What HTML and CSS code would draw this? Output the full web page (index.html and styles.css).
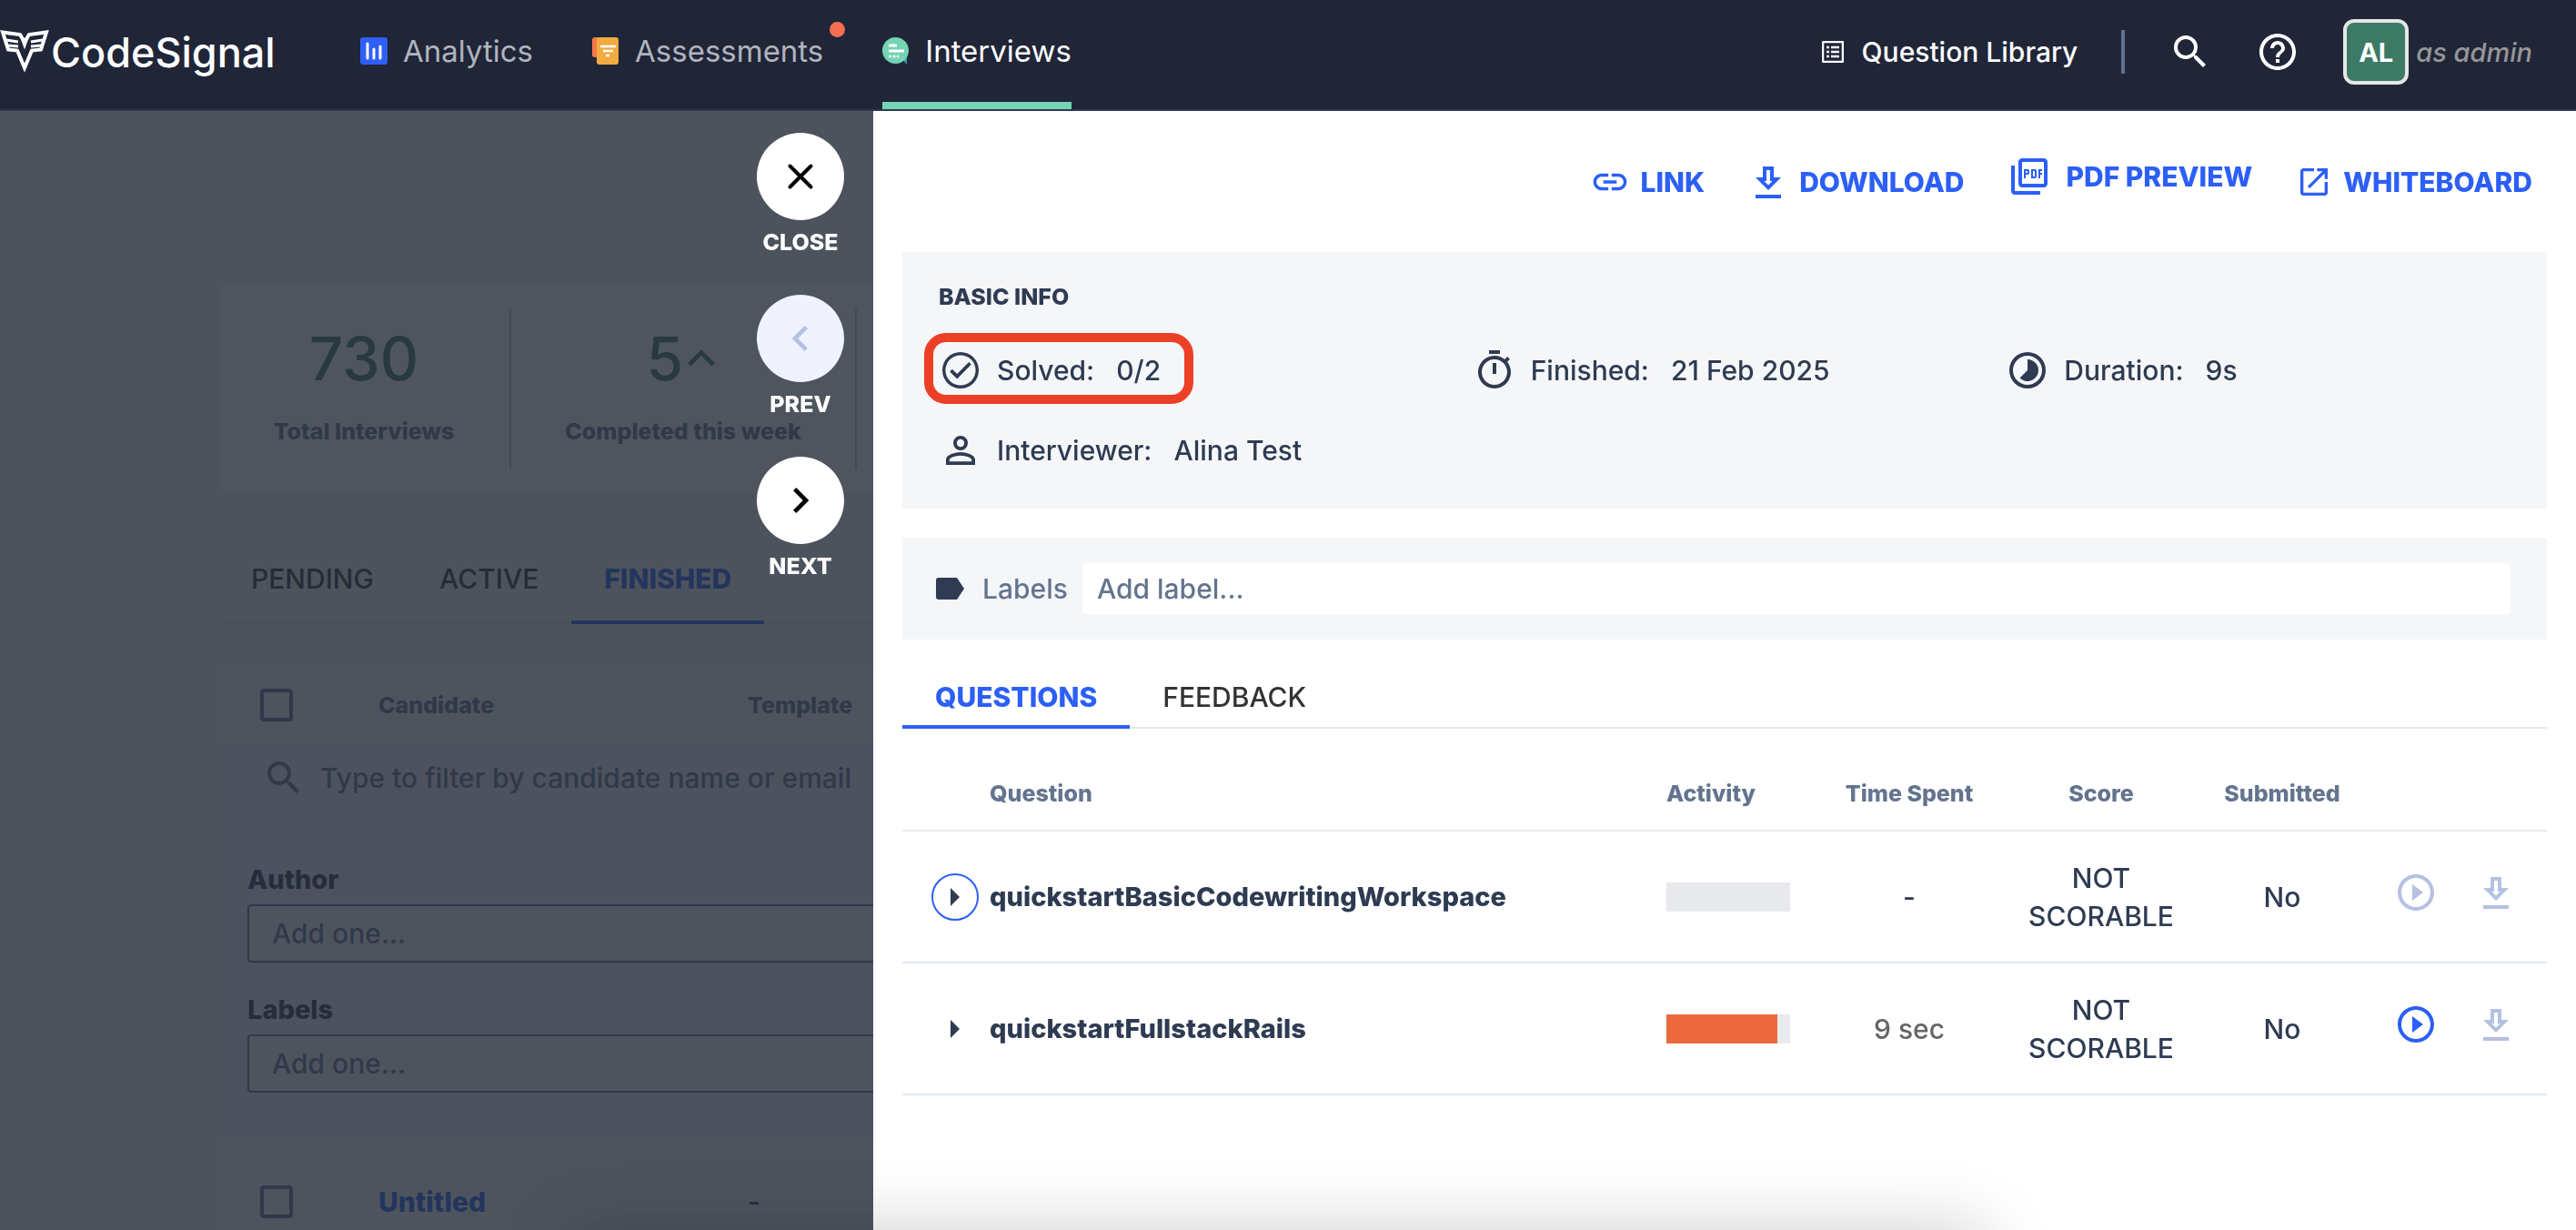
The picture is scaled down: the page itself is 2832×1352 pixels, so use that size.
FILE: index.html
```html
<!DOCTYPE html>
<html lang="en">
<head>
    <meta charset="UTF-8">
    <meta name="viewport" content="width=device-width, initial-scale=1.0">
    <title>CodeSignal - Interviews</title>
    <link rel="stylesheet" href="styles.css">
</head>
<body>

<header class="topbar">
    <a class="logo" href="#" aria-label="CodeSignal">
        <svg width="54" height="48" viewBox="0 0 54 48" fill="none" stroke="#fff" stroke-width="4"><path d="M3 2.500L22 5l5 8 5-8 19-2.500-6 19-10 1-8 19-8-19-10-1z"/><path d="M23 6l4 11 4-11" stroke-width="3"/><path d="M7 11l13 2M9 17l11 1M47 11l-13 2M45 17l-11 1" stroke-width="3"/></svg>
        <span>CodeSignal</span>
    </a>
    <nav class="main-nav">
        <a class="nav-link" href="#">
            <svg width="30" height="30" viewBox="0 0 30 30"><rect width="30" height="30" rx="3" fill="#2f5ff5"/><path d="M8 7v16M15 13v10M22 10v13" stroke="#fff" stroke-width="3" stroke-linecap="round"/></svg>
            Analytics
        </a>
        <a class="nav-link" href="#">
            <svg width="30" height="30" viewBox="0 0 30 30"><rect width="24" height="22" rx="3" fill="#f2784b"/><rect x="5" width="24" height="30" rx="3" fill="#f2ab40"/><path d="M9 10h17M12 15h11M15 20h4" stroke="#fff" stroke-width="2.5"/></svg>
            Assessments
            <span class="dot"></span>
        </a>
        <a class="nav-link active" href="#">
            <svg width="30" height="30" viewBox="0 0 30 30"><path d="M20 22l7 8v-9z" fill="#3a9a9b"/><circle cx="14.500" cy="14.500" r="14.500" fill="#74d4b4"/><path d="M7 9h9M7 15h17" stroke="#fff" stroke-width="3"/><path d="M7 21h11" stroke="#fff" stroke-width="2.500" stroke-dasharray="3 1.500"/></svg>
            Interviews
        </a>
    </nav>
    <div class="topbar-right">
        <a class="library" href="#">
            <svg width="24" height="24" viewBox="0 0 24 24" fill="none" stroke="#fff"><rect x="1" y="1" width="22" height="22" rx="1" stroke-width="2.500"/><path d="M5 7h3M5 12h3M5 17h3M10 7h9M10 12h9M10 17h9" stroke-width="2.500"/></svg>
            Question Library
        </a>
        <span class="divider"></span>
        <button class="icon-btn" aria-label="Search">
            <svg width="48" height="48" viewBox="0 0 24 24" fill="#fff"><path d="M15.500 14h-.79l-.28-.27A6.471 6.471 0 0 0 16 9.500 6.500 6.500 0 1 0 9.500 16c1.610 0 3.090-.59 4.230-1.570l.27.28v.79l5 4.990L20.490 19l-4.990-5zm-6 0C7.010 14 5 11.990 5 9.500S7.010 5 9.500 5 14 7.010 14 9.500 11.990 14 9.500 14z"/></svg>
        </button>
        <button class="icon-btn" aria-label="Help">
            <svg width="48" height="48" viewBox="0 0 24 24" fill="#fff"><path d="M11 18h2v-2h-2v2zm1-16C6.480 2 2 6.480 2 12s4.480 10 10 10 10-4.480 10-10S17.520 2 12 2zm0 18c-4.410 0-8-3.590-8-8s3.590-8 8-8 8 3.590 8 8-3.590 8-8 8zm0-14c-2.210 0-4 1.790-4 4h2c0-1.100.9-2 2-2s2 .9 2 2c0 2-3 1.750-3 5h2c0-2.250 3-2.500 3-5 0-2.210-1.790-4-4-4z"/></svg>
        </button>
        <button class="avatar">AL</button>
        <em class="role">as admin</em>
    </div>
</header>

<main class="page">
    <section class="stats">
        <div class="stat">
            <strong>730</strong>
            <span>Total Interviews</span>
        </div>
        <div class="stat">
            <strong>5<svg width="40" height="48" viewBox="2 0 20 24"><path d="M5.400 15.400L12 8.800l6.600 6.600" fill="none" stroke="#3d7a66" stroke-width="2.400"/></svg></strong>
            <span>Completed this week</span>
        </div>
    </section>

    <div class="tabs page-tabs">
        <button class="tab">PENDING</button>
        <button class="tab">ACTIVE</button>
        <button class="tab selected">FINISHED</button>
    </div>

    <section class="candidates">
        <div class="list-row list-head">
            <input type="checkbox" aria-label="Select all">
            <span>Candidate</span>
            <span>Template</span>
        </div>
        <div class="filter">
            <svg width="48" height="48" viewBox="0 0 24 24" fill="#64748f"><path d="M15.500 14h-.79l-.28-.27A6.471 6.471 0 0 0 16 9.500 6.500 6.500 0 1 0 9.500 16c1.610 0 3.090-.59 4.230-1.570l.27.28v.79l5 4.990L20.490 19l-4.990-5zm-6 0C7.010 14 5 11.990 5 9.500S7.010 5 9.500 5 14 7.010 14 9.500 11.990 14 9.500 14z"/></svg>
            <input type="text" placeholder="Type to filter by candidate name or email" aria-label="Filter candidates">
        </div>
        <div class="filter-fields">
            <label for="author">Author</label>
            <input type="text" id="author" placeholder="Add one...">
            <label for="filterLabels">Labels</label>
            <input type="text" id="filterLabels" placeholder="Add one...">
        </div>
        <div class="list-row">
            <input type="checkbox" aria-label="Select Untitled">
            <a href="#">Untitled</a>
            <span>-</span>
        </div>
    </section>
</main>

<div class="overlay">
    <div class="overlay-controls">
        <div class="control">
            <button id="close" aria-label="Close"><svg width="48" height="48" viewBox="0 0 48 48"><path d="M12.500 12.500l23 23M35.500 12.500l-23 23" stroke="#000" stroke-width="4" stroke-linecap="round"/></svg></button>
            <label for="close">CLOSE</label>
        </div>
        <div class="control">
            <button id="prev" disabled aria-label="Previous"><svg width="56" height="56" viewBox="0 0 24 24" fill="#b5c0e2"><path d="M15.410 7.410L14 6l-6 6 6 6 1.410-1.410L10.830 12z"/></svg></button>
            <label for="prev">PREV</label>
        </div>
        <div class="control">
            <button id="next" aria-label="Next"><svg width="56" height="56" viewBox="0 0 24 24"><path d="M10 6L8.590 7.410 13.170 12l-4.580 4.590L10 18l6-6z"/></svg></button>
            <label for="next">NEXT</label>
        </div>
    </div>

    <section class="drawer">
        <div class="actions">
            <a href="#"><svg width="44" height="44" viewBox="0 0 24 24" fill="#2c5ff6"><path d="M3.900 12c0-1.710 1.390-3.100 3.100-3.100h4V7H7c-2.760 0-5 2.240-5 5s2.240 5 5 5h4v-1.900H7c-1.710 0-3.100-1.390-3.100-3.100zM8 13h8v-2H8v2zm9-6h-4v1.900h4c1.710 0 3.100 1.390 3.100 3.100s-1.390 3.100-3.100 3.100h-4V17h4c2.760 0 5-2.240 5-5s-2.240-5-5-5z"/></svg>LINK</a>
            <a href="#"><svg width="44" height="44" viewBox="0 0 44 44" fill="#2c5ff6"><path fill-rule="evenodd" d="M16 5h12v12h8L22 31 8 17h8zM20 9v12h-2.500l4.500 4.500 4.500-4.500H24V9zM8 36h28v4H8z"/></svg>DOWNLOAD</a>
            <a class="pdf" href="#"><svg width="48" height="48" viewBox="0 0 24 24" fill="#2c5ff6"><path d="M20 2H8c-1.100 0-2 .9-2 2v12c0 1.100.9 2 2 2h12c1.100 0 2-.9 2-2V4c0-1.100-.9-2-2-2zm0 14H8V4h12v12zM4 6H2v14c0 1.100.9 2 2 2h14v-2H4V6zm12 6V9c0-.55-.45-1-1-1h-2v5h2c.55 0 1-.45 1-1zm-2-3h1v3h-1V9zm4 2h1v-1h-1V9h1V8h-2v5h1zm-8 0h1c.55 0 1-.45 1-1V9c0-.55-.45-1-1-1H9v5h1v-2zm0-2h1v1h-1V9z"/></svg>PDF PREVIEW</a>
            <a href="#"><svg width="40" height="40" viewBox="0 0 24 24" fill="#2c5ff6"><path d="M19 19H5V5h7V3H5c-1.110 0-2 .9-2 2v14c0 1.100.89 2 2 2h14c1.100 0 2-.9 2-2v-7h-2v7zM14 3v2h3.590l-9.830 9.830 1.410 1.410L19 6.410V10h2V3h-7z"/></svg>WHITEBOARD</a>
        </div>

        <div class="info-card">
            <h2>BASIC INFO</h2>
            <div class="info-grid">
                <div class="info highlight">
                    <svg width="48" height="48" viewBox="0 0 24 24" fill="#2e3b52"><path d="M12 2a10 10 0 1 0 0 20 10 10 0 0 0 0-20zm0 18.300a8.300 8.300 0 1 1 0-16.600 8.300 8.300 0 0 1 0 16.600zM16.600 7.500l-6.500 6.500-2.700-2.600-1.300 1.400 4 3.900 7.800-7.900z"/></svg>
                    <span>Solved:</span><span>0/2</span>
                </div>
                <div class="info">
                    <svg width="48" height="48" viewBox="0 0 24 24" fill="#2e3b52"><path d="M15 1H9v2h6V1zm-4 13h2V8h-2v6zm8.030-6.610l1.420-1.420c-.43-.51-.9-.99-1.410-1.410l-1.420 1.420A8.962 8.962 0 0 0 12 4a9 9 0 1 0 7.030 3.390zM12 20c-3.870 0-7-3.130-7-7s3.130-7 7-7 7 3.130 7 7-3.130 7-7 7z"/></svg>
                    <span>Finished:</span><span>21 Feb 2025</span>
                </div>
                <div class="info">
                    <svg width="48" height="48" viewBox="0 0 24 24" fill="#2e3b52"><path d="M12 2a10 10 0 1 0 0 20 10 10 0 0 0 0-20zm0 18a8 8 0 1 1 0-16 8 8 0 0 1 0 16zM12 6v6l-4.240 4.240A6 6 0 1 0 12 6z"/></svg>
                    <span>Duration:</span><span>9s</span>
                </div>
                <div class="info">
                    <svg width="48" height="48" viewBox="0 0 24 24" fill="#2e3b52"><path d="M12 5.900a2.100 2.100 0 1 1 0 4.200 2.100 2.100 0 0 1 0-4.200m0 9c2.970 0 6.100 1.460 6.100 2.100v1.100H5.900V17c0-.64 3.130-2.100 6.100-2.100M12 4a4 4 0 1 0 0 8 4 4 0 0 0 0-8zm0 9c-2.670 0-8 1.340-8 4v3h16v-3c0-2.660-5.330-4-8-4z"/></svg>
                    <span>Interviewer:</span><span>Alina Test</span>
                </div>
            </div>
        </div>

        <div class="label-card">
            <svg width="32" height="24" viewBox="0 0 32 24" fill="#2e3b52"><path d="M3 0h20l8 12-8 12H3q-3 0-3-3V3q0-3 3-3z"/></svg>
            <label for="labels">Labels</label>
            <input type="text" id="labels" placeholder="Add label...">
        </div>

        <div class="tabs">
            <button class="tab selected">QUESTIONS</button>
            <button class="tab">FEEDBACK</button>
        </div>

        <table class="questions">
            <thead>
                <tr>
                    <th class="col-toggle"></th>
                    <th class="col-question">Question</th>
                    <th class="col-activity">Activity</th>
                    <th class="col-time">Time Spent</th>
                    <th class="col-score">Score</th>
                    <th class="col-submitted">Submitted</th>
                    <th class="col-play"></th>
                    <th class="col-download"></th>
                </tr>
            </thead>
            <tbody>
                <tr>
                    <td><button class="toggle focused" aria-label="Expand"><svg width="10" height="20" viewBox="0 0 10 20"><path d="M0 0l10 10L0 20z" fill="#2e3b52"/></svg></button></td>
                    <td class="name">quickstartBasicCodewritingWorkspace</td>
                    <td><div class="bar"></div></td>
                    <td class="mid">-</td>
                    <td class="mid">NOT SCORABLE</td>
                    <td class="mid">No</td>
                    <td class="action"><button class="icon-btn" disabled aria-label="Play"><svg width="48" height="48" viewBox="0 0 24 24" fill="#b5c0e2"><path d="M10 16.500l6-4.500-6-4.500v9zM12 2C6.480 2 2 6.480 2 12s4.480 10 10 10 10-4.480 10-10S17.520 2 12 2zm0 18c-4.410 0-8-3.590-8-8s3.590-8 8-8 8 3.590 8 8-3.590 8-8 8z"/></svg></button></td>
                    <td class="action"><button class="icon-btn" disabled aria-label="Download"><svg width="44" height="44" viewBox="0 0 44 44" fill="#b5c0e2"><path fill-rule="evenodd" d="M16 5h12v12h8L22 31 8 17h8zM20 9v12h-2.500l4.500 4.500 4.500-4.500H24V9zM8 36h28v4H8z"/></svg></button></td>
                </tr>
                <tr>
                    <td><button class="toggle" aria-label="Expand"><svg width="10" height="20" viewBox="0 0 10 20"><path d="M0 0l10 10L0 20z" fill="#2e3b52"/></svg></button></td>
                    <td class="name">quickstartFullstackRails</td>
                    <td><div class="bar"><div class="bar-fill" style="width: 90%"></div></div></td>
                    <td class="mid spent">9 sec</td>
                    <td class="mid">NOT SCORABLE</td>
                    <td class="mid">No</td>
                    <td class="action"><button class="icon-btn" aria-label="Play"><svg width="48" height="48" viewBox="0 0 24 24" fill="#2c5ff6"><path d="M10 16.500l6-4.500-6-4.500v9zM12 2C6.480 2 2 6.480 2 12s4.480 10 10 10 10-4.480 10-10S17.520 2 12 2zm0 18c-4.410 0-8-3.590-8-8s3.590-8 8-8 8 3.590 8 8-3.590 8-8 8z"/></svg></button></td>
                    <td class="action"><button class="icon-btn" disabled aria-label="Download"><svg width="44" height="44" viewBox="0 0 44 44" fill="#b5c0e2"><path fill-rule="evenodd" d="M16 5h12v12h8L22 31 8 17h8zM20 9v12h-2.500l4.500 4.500 4.500-4.500H24V9zM8 36h28v4H8z"/></svg></button></td>
                </tr>
            </tbody>
        </table>
    </section>
</div>

<div class="bottom-shadow"></div>

</body>
</html>
```
FILE: styles.css
```css
* {
    box-sizing: border-box;
}
body {
    margin: 0;
    height: 100vh;
    overflow: hidden;
    font-family: Inter, "Liberation Sans", sans-serif;
    font-size: 30px;
    font-weight: 500;
    color: #2e3b52;
    background-color: #f2f3f4;
}
a {
    color: inherit;
    text-decoration: none;
}
button, input {
    font: inherit;
    color: inherit;
}
button {
    padding: 0;
    border: none;
    background: none;
    cursor: pointer;
}
svg {
    display: block;
    flex: none;
}
input::placeholder {
    color: #64748f;
    opacity: 1;
}

/* top bar */
.topbar {
    display: flex;
    align-items: center;
    height: 122px;
    padding-right: 48px;
    background-color: #202538;
    border-bottom: 2px solid #2e3853;
    color: #fff;
}
.logo {
    display: flex;
    align-items: center;
    gap: 2px;
    width: 396px;
    padding-bottom: 6px;
    font-size: 45px;
}
.main-nav {
    display: flex;
    align-self: stretch;
    gap: 65px;
}
.nav-link {
    position: relative;
    display: flex;
    align-items: center;
    gap: 17px;
    font-size: 33px;
    font-weight: 400;
    color: #b0b4bd;
    border-bottom: 8px solid transparent;
}
.nav-link.active {
    color: #fff;
    border-bottom-color: #74d4b4;
}
.dot {
    position: absolute;
    top: 24px;
    right: -24px;
    width: 17px;
    height: 17px;
    border-radius: 50%;
    background-color: #f36f4f;
}
.topbar-right {
    display: flex;
    align-items: center;
    margin-left: auto;
    padding-bottom: 6px;
}
.library {
    display: flex;
    align-items: center;
    gap: 20px;
}
.divider {
    width: 4px;
    height: 48px;
    margin: 0 48px;
    background-color: #5f708c;
}
.topbar .icon-btn {
    margin-right: 48px;
}
.avatar {
    width: 72px;
    height: 72px;
    margin-right: 8px;
    border: 4px solid #e6e6e6;
    border-radius: 12px;
    background-color: #3d7a66;
    font-size: 29px;
    font-weight: 700;
}
.role {
    font-size: 29px;
    font-weight: 500;
    color: #969696;
}

/* interviews page behind the drawer */
.page {
    padding: 192px 0 0 240px;
}
.stats {
    display: flex;
    height: 226px;
    padding: 24px 0;
    background-color: #fff;
}
.stat {
    display: flex;
    flex-direction: column;
    align-items: center;
    width: 380px;
    height: 178px;
    border-right: 2px solid #c3c8d0;
    font-size: 25px;
    font-weight: 800;
    color: #64748f;
}
.stat:first-child {
    width: 322px;
}
.stat strong {
    display: flex;
    align-items: center;
    height: 112px;
    font-size: 66px;
    font-weight: 500;
    color: #3d7a66;
}
.stat span {
    line-height: 48px;
}
.tabs {
    display: flex;
    box-shadow: inset 0 -2px #e6e6e6;
}
.tab {
    height: 68px;
    padding: 2px 36px 0;
    border-bottom: 4px solid transparent;
    font-weight: 500;
    color: #333;
}
.tab.selected {
    font-weight: 800;
    color: #2c5ff6;
    border-color: #2c5ff6;
}
.page-tabs {
    margin: 48px 0 50px;
}
.page-tabs .tab {
    height: 98px;
}
.candidates {
    background-color: #eff0f8;
}
.list-row {
    display: grid;
    grid-template-columns: 130px 406px 1fr;
    align-items: center;
    height: 140px;
    padding-left: 46px;
    background-color: #fafbfb;
}
.list-head {
    height: 78px;
    font-size: 25px;
    font-weight: 800;
    color: #64748f;
}
.list-row a {
    font-weight: 800;
    color: #2c5ff6;
}
input[type="checkbox"] {
    appearance: none;
    width: 36px;
    height: 36px;
    margin: 0;
    border: 4px solid #64748f;
    border-radius: 4px;
}
.filter {
    display: flex;
    align-items: center;
    gap: 16px;
    height: 80px;
    padding: 4px 0 0 48px;
    border-bottom: 2px solid #e9ebf2;
}
.filter input {
    width: 700px;
    padding: 0;
    border: none;
    background: none;
}
.filter-fields {
    display: flex;
    flex-direction: column;
    height: 357px;
    padding: 46px 32px 0;
}
.filter-fields label {
    font-size: 29px;
    font-weight: 800;
    line-height: 54px;
}
.filter-fields input {
    flex: none;
    height: 64px;
    margin-bottom: 25px;
    padding: 0 25px;
    border: 2px solid #64748f;
    border-radius: 4px;
    background-color: #fafbfb;
}

/* dimmed overlay with the drawer */
.overlay {
    position: fixed;
    inset: 122px 0 0;
    display: flex;
    background-color: rgba(35, 42, 55, 0.8);
}
.overlay-controls {
    width: 34%;
    max-width: 960px;
    padding: 24px 32px 0;
}
.control {
    display: flex;
    flex-direction: column;
    align-items: center;
    gap: 8px;
    width: 96px;
    height: 178px;
    margin-left: auto;
    font-size: 25px;
    font-weight: 800;
    line-height: 32px;
    color: #fff;
}
.control button {
    display: grid;
    place-items: center;
    width: 96px;
    height: 96px;
    border-radius: 50%;
    background-color: #fff;
}
.control button:disabled {
    background-color: #f0f3fd;
}
.drawer {
    flex: 1;
    padding: 0 32px;
    background-color: #fff;
}
.actions {
    display: flex;
    justify-content: flex-end;
    align-items: center;
    gap: 48px;
    height: 155px;
    padding-right: 16px;
    font-weight: 800;
    color: #2c5ff6;
}
.actions a {
    display: flex;
    align-items: center;
    gap: 12px;
}
.actions .pdf {
    gap: 16px;
    padding-bottom: 12px;
}
.info-card {
    height: 282px;
    padding: 32px 24px;
    background-color: #f5f6f8;
}
.info-card h2 {
    margin: 0 0 23px;
    padding-left: 16px;
    font-size: 25px;
    font-weight: 800;
    line-height: 34px;
}
.info-grid {
    display: grid;
    grid-template-columns: repeat(3, 1fr);
    grid-auto-rows: 78px;
    row-gap: 10px;
}
.info {
    display: flex;
    align-items: center;
    padding: 4px 16px 0;
}
.info span {
    margin-left: 16px;
}
.info span + span {
    margin-left: 24px;
}
.info.highlight {
    justify-self: start;
    width: 296px;
    padding: 4px 6px 0;
    border: 10px solid #ec4026;
    border-radius: 24px;
}
.label-card {
    display: flex;
    align-items: center;
    height: 112px;
    margin: 32px 0 30px;
    padding: 0 40px 0 37px;
    background-color: #f5f6f8;
    color: #64748f;
}
.label-card label {
    margin: 0 16px 0 19px;
}
.label-card input {
    flex: 1;
    height: 56px;
    padding: 0 16px;
    border: none;
    border-radius: 4px;
    background-color: #fff;
}
.questions {
    width: 100%;
    table-layout: fixed;
    border-collapse: collapse;
}
.questions th {
    height: 112px;
    padding: 30px 0 0;
    font-size: 25px;
    font-weight: 800;
    color: #64748f;
    border-bottom: 2px solid #e6eaee;
}
.questions td {
    height: 145px;
    padding: 0;
    border-bottom: 2px solid #e1e6f8;
    line-height: 42px;
}
.col-toggle {
    width: 96px;
}
.questions .col-question, .questions .col-activity {
    text-align: left;
}
.col-activity {
    width: 140px;
}
.col-time {
    width: 254px;
}
.col-score {
    width: 168px;
}
.col-submitted {
    width: 230px;
}
.col-play {
    width: 64px;
}
.col-download {
    width: 112px;
}
.toggle {
    display: grid;
    place-items: center;
    width: 52px;
    height: 52px;
    margin-left: 32px;
    border-radius: 50%;
}
.toggle.focused {
    border: 2px solid #2c5ff6;
}
.questions .name {
    font-size: 29px;
    font-weight: 800;
}
.bar {
    width: 136px;
    height: 32px;
    background-color: #e8e9ed;
}
.bar-fill {
    height: 100%;
    background-color: #ec6a3e;
}
.mid {
    text-align: center;
}
.spent {
    color: #666;
}
.questions .action {
    padding-bottom: 10px;
}
.action .icon-btn {
    display: block;
    margin: 0 auto;
}

/* soft shade along the bottom edge of the window */
.bottom-shadow {
    position: fixed;
    top: 100%;
    left: 22%;
    right: 23%;
    height: 200px;
    box-shadow: 0 0 80px rgba(0, 0, 0, 0.2);
    pointer-events: none;
}
```
